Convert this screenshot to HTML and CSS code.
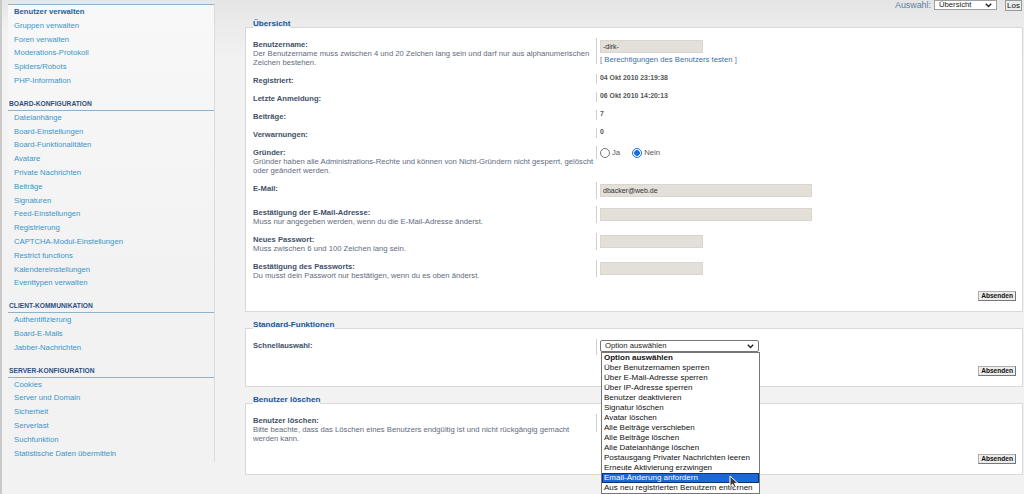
FILE: index.html
```html
<!DOCTYPE html>
<html lang="de">
<head>
    <meta charset="UTF-8">
    <title>Benutzer verwalten</title>
    <link rel="stylesheet" href="styles.css">
</head>
<body>
<div class="page">
    <div class="sidebar">
        <div class="menu">
            <ul>
                <li class="active"><a href="#">Benutzer verwalten</a></li>
                <li><a href="#">Gruppen verwalten</a></li>
                <li><a href="#">Foren verwalten</a></li>
                <li><a href="#">Moderations-Protokoll</a></li>
                <li><a href="#">Spiders/Robots</a></li>
                <li><a href="#">PHP-Information</a></li>
            </ul>
            <h4 class="menu-head">Board-Konfiguration</h4>
            <ul>
                <li><a href="#">Dateianhänge</a></li>
                <li><a href="#">Board-Einstellungen</a></li>
                <li><a href="#">Board-Funktionalitäten</a></li>
                <li><a href="#">Avatare</a></li>
                <li><a href="#">Private Nachrichten</a></li>
                <li><a href="#">Beiträge</a></li>
                <li><a href="#">Signaturen</a></li>
                <li><a href="#">Feed-Einstellungen</a></li>
                <li><a href="#">Registrierung</a></li>
                <li><a href="#">CAPTCHA-Modul-Einstellungen</a></li>
                <li><a href="#">Restrict functions</a></li>
                <li><a href="#">Kalendereinstellungen</a></li>
                <li><a href="#">Eventtypen verwalten</a></li>
            </ul>
            <h4 class="menu-head">Client-Kommunikation</h4>
            <ul>
                <li><a href="#">Authentifizierung</a></li>
                <li><a href="#">Board-E-Mails</a></li>
                <li><a href="#">Jabber-Nachrichten</a></li>
            </ul>
            <h4 class="menu-head">Server-Konfiguration</h4>
            <ul>
                <li><a href="#">Cookies</a></li>
                <li><a href="#">Server und Domain</a></li>
                <li><a href="#">Sicherheit</a></li>
                <li><a href="#">Serverlast</a></li>
                <li><a href="#">Suchfunktion</a></li>
                <li><a href="#">Statistische Daten übermitteln</a></li>
            </ul>
        </div>
    </div>

    <div class="main">
        <div class="mode-select">
            <span class="mode-label">Auswahl:</span>
            <div class="select select-small">Übersicht
                <svg class="chev" width="7" height="5" viewBox="0 0 7 5"><path d="M0.8 0.8 L3.5 3.6 L6.2 0.8" fill="none" stroke="#222" stroke-width="1.4"/></svg>
            </div>
            <button class="btn-los">Los</button>
        </div>

        <fieldset>
            <legend>Übersicht</legend>
            <dl>
                <dt><label>Benutzername:</label><span class="explain">Der Benutzername muss zwischen 4 und 20 Zeichen lang sein und darf nur aus alphanumerischen Zeichen bestehen.</span></dt>
                <dd>
                    <input class="text short" type="text" value="-dirk-">
                    <span class="perm">[ <a href="#">Berechtigungen des Benutzers testen</a> ]</span>
                </dd>
            </dl>
            <dl>
                <dt><label>Registriert:</label></dt>
                <dd><strong class="value">04 Okt 2010 23:19:38</strong></dd>
            </dl>
            <dl>
                <dt><label>Letzte Anmeldung:</label></dt>
                <dd><strong class="value">06 Okt 2010 14:20:13</strong></dd>
            </dl>
            <dl>
                <dt><label>Beiträge:</label></dt>
                <dd><strong class="value">7</strong></dd>
            </dl>
            <dl>
                <dt><label>Verwarnungen:</label></dt>
                <dd><strong class="value">0</strong></dd>
            </dl>
            <dl>
                <dt><label>Gründer:</label><span class="explain">Gründer haben alle Administrations-Rechte und können von Nicht-Gründern nicht gesperrt, gelöscht oder geändert werden.</span></dt>
                <dd>
                    <div class="radios">
                        <span class="radio"></span><span class="radio-label">Ja</span>
                        <span class="radio checked"></span><span class="radio-label">Nein</span>
                    </div>
                </dd>
            </dl>
            <dl>
                <dt><label>E-Mail:</label></dt>
                <dd><input class="text long" type="text" value="dbacker@web.de"></dd>
            </dl>
            <dl>
                <dt><label>Bestätigung der E-Mail-Adresse:</label><span class="explain">Muss nur angegeben werden, wenn du die E-Mail-Adresse änderst.</span></dt>
                <dd><input class="text long" type="text"></dd>
            </dl>
            <dl>
                <dt><label>Neues Passwort:</label><span class="explain">Muss zwischen 6 und 100 Zeichen lang sein.</span></dt>
                <dd><input class="text short" type="password"></dd>
            </dl>
            <dl>
                <dt><label>Bestätigung des Passworts:</label><span class="explain">Du musst dein Passwort nur bestätigen, wenn du es oben änderst.</span></dt>
                <dd><input class="text short" type="password"></dd>
            </dl>
            <div class="submit"><button class="btn">Absenden</button></div>
        </fieldset>

        <fieldset>
            <legend>Standard-Funktionen</legend>
            <dl>
                <dt><label>Schnellauswahl:</label></dt>
                <dd>
                    <div class="select select-wide">Option auswählen
                        <svg class="chev" width="7" height="5" viewBox="0 0 7 5"><path d="M0.8 0.8 L3.5 3.6 L6.2 0.8" fill="none" stroke="#222" stroke-width="1.4"/></svg>
                        <ul class="options">
                            <li class="opt-head">Option auswählen</li>
                            <li>Über Benutzernamen sperren</li>
                            <li>Über E-Mail-Adresse sperren</li>
                            <li>Über IP-Adresse sperren</li>
                            <li>Benutzer deaktivieren</li>
                            <li>Signatur löschen</li>
                            <li>Avatar löschen</li>
                            <li>Alle Beiträge verschieben</li>
                            <li>Alle Beiträge löschen</li>
                            <li>Alle Dateianhänge löschen</li>
                            <li>Postausgang Privater Nachrichten leeren</li>
                            <li>Erneute Aktivierung erzwingen</li>
                            <li class="opt-hover">Email-Änderung anfordern</li>
                            <li>Aus neu registrierten Benutzern entfernen</li>
                        </ul>
                        <svg class="cursor" width="10" height="14" viewBox="0 0 10 14"><path d="M1 1 L1 11.5 L3.6 9.1 L5.5 13 L7.3 12.2 L5.5 8.4 L9 8.4 Z" fill="#3a3a3a" stroke="#fff" stroke-width="1"/></svg>
                    </div>
                </dd>
            </dl>
            <div class="submit"><button class="btn">Absenden</button></div>
        </fieldset>

        <fieldset>
            <legend>Benutzer löschen</legend>
            <dl>
                <dt><label>Benutzer löschen:</label><span class="explain">Bitte beachte, dass das Löschen eines Benutzers endgültig ist und nicht rückgängig gemacht werden kann.</span></dt>
                <dd><div class="placeholder"></div></dd>
            </dl>
            <div class="submit"><button class="btn">Absenden</button></div>
        </fieldset>
    </div>
</div>
</body>
</html>
```

FILE: styles.css
```css
html, body {
    height: 494px;
    overflow: hidden;
}
body {
    margin: 0;
    font-family: "Liberation Sans", Arial, sans-serif;
    background-color: #f2f2f2;
    border-left: 2px solid #c9c9c9;
    box-sizing: border-box;
}
.page {
    display: flex;
    height: 100%;
}

/* left menu */
.sidebar {
    width: 207px;
    flex-shrink: 0;
    padding: 4px 0 0 6px;
    background: linear-gradient(#e6e6e7, #f2f2f2 30px);
}
.menu {
    border-top: 1px solid #8fb1c9;
    border-right: 1px solid #dcdcdc;
    background: linear-gradient(#f8f8f8, #f2f2f2 60%);
    padding-bottom: 2px;
}
.menu ul {
    margin: 0;
    padding: 0;
    list-style: none;
}
.menu li a {
    display: block;
    height: 13.8px;
    line-height: 13.8px;
    padding-left: 6px;
    font-size: 7.7px;
    color: #3996ca;
    text-decoration: none;
}
.menu li.active a {
    font-weight: bold;
    color: #1c6698;
}
.menu-head {
    margin: 11px 0 0;
    padding: 0 0 1px 1px;
    font-size: 6.7px;
    line-height: 10px;
    font-weight: bold;
    text-transform: uppercase;
    color: #2c4f80;
    border-bottom: 1px solid #8fb1c9;
}

/* main area */
.main {
    flex-grow: 1;
    padding-left: 30px;
    background: linear-gradient(#e5e5e6 0, #ebebec 25px, #f2f2f2 60px);
}
.mode-select {
    height: 19px;
    display: flex;
    justify-content: flex-end;
    align-items: flex-start;
    padding-right: 2px;
}
.mode-label {
    font-size: 8.9px;
    line-height: 10px;
    color: #5a7ea4;
    margin-right: 3px;
}
.select {
    position: relative;
    box-sizing: border-box;
    background-color: #fff;
    border: 1px solid #767676;
    color: #222;
}
.select .chev {
    position: absolute;
    top: 3px;
    right: 4px;
}
.select-small {
    width: 63px;
    height: 10px;
    font-size: 7.7px;
    line-height: 8px;
    padding-left: 4px;
    border-color: #a0a0a0;
}
.select-small .chev {
    top: 2px;
}
.btn-los {
    margin-left: 8px;
    width: 17px;
    height: 11px;
    padding: 0;
    border: 1px solid #999;
    background-color: #ebebeb;
    font-family: "Liberation Sans", Arial, sans-serif;
    font-size: 8px;
    line-height: 8px;
    color: #111;
}

fieldset {
    margin: 0 1px 8.5px 0;
    padding: 0 6px 0 7px;
    border: 1px solid #d9d9d9;
    background-color: #fff;
    min-width: 0;
}
legend {
    padding: 0 0 6px;
    font-size: 8.1px;
    line-height: 10px;
    font-weight: bold;
    color: #17589a;
}
dl {
    display: flex;
    margin: 0;
    padding: 3px 0 4px;
}
dt {
    width: 343px;
    flex-shrink: 0;
    padding: 2px 2px 0 0;
    box-sizing: border-box;
}
dt label {
    display: block;
    font-size: 7.6px;
    line-height: 9px;
    font-weight: bold;
    color: #425067;
}
.explain {
    display: block;
    font-size: 7.7px;
    line-height: 9px;
    color: #5f6b7e;
}
dd {
    margin: 0;
    padding-left: 3px;
    border-left: 1px solid #cfcfcf;
    align-self: flex-start;
}
.value {
    display: block;
    font-size: 6.9px;
    line-height: 10px;
    margin-top: -1px;
    padding-bottom: 1px;
    color: #555;
}
input.text {
    display: block;
    box-sizing: border-box;
    height: 13px;
    margin: 2px 0;
    padding: 0 2px;
    border: 1px solid #dad5ce;
    background-color: #e3dfd9;
    font-family: "Liberation Sans", Arial, sans-serif;
    font-size: 7px;
    color: #333;
}
input.short {
    width: 103px;
}
input.long {
    width: 212px;
}
.perm {
    display: block;
    font-size: 7.7px;
    line-height: 9px;
    color: #6b7788;
}
.perm a {
    color: #3a6fa3;
    text-decoration: none;
}
.radios {
    display: flex;
    align-items: center;
    height: 13px;
}
.radio {
    width: 10px;
    height: 10px;
    box-sizing: border-box;
    border: 1px solid #767676;
    border-radius: 50%;
    background-color: #fff;
}
.radio.checked {
    border-color: #1a6fe0;
    background: radial-gradient(circle, #1a6fe0 0 2.6px, #fff 3.1px);
}
.radio-label {
    font-size: 7.7px;
    color: #555;
    margin: 0 12px 0 2px;
}
.submit {
    display: flex;
    justify-content: flex-end;
    padding: 6.5px 0 10px;
}
.btn {
    height: 10px;
    padding: 0 2px;
    border: 1px solid;
    border-color: #b0b0b0 #777 #777 #b0b0b0;
    background-color: #ececec;
    font-family: "Liberation Sans", Arial, sans-serif;
    font-size: 6.6px;
    line-height: 8px;
    font-weight: bold;
    color: #111;
}
.select-wide {
    width: 159px;
    height: 12px;
    margin: 1px 0 3px;
    padding-left: 4px;
    border-radius: 2px;
    font-size: 7.7px;
    line-height: 10px;
}
.options {
    position: absolute;
    top: 11px;
    left: 0;
    z-index: 5;
    width: 159px;
    box-sizing: border-box;
    margin: 0;
    padding: 0;
    list-style: none;
    border: 1px solid #767676;
    background-color: #fff;
    font-size: 8px;
    line-height: 10px;
    color: #111;
}
.options li {
    padding-left: 2px;
    white-space: nowrap;
    overflow: hidden;
}
.options .opt-head {
    font-weight: bold;
}
.options .opt-hover {
    background-color: #1d68d8;
    box-shadow: inset 0 0 0 1px #0e3478;
    color: #fff;
}
.cursor {
    position: absolute;
    top: 134px;
    left: 128px;
    z-index: 6;
}
.placeholder {
    width: 20px;
    height: 18px;
}
```
